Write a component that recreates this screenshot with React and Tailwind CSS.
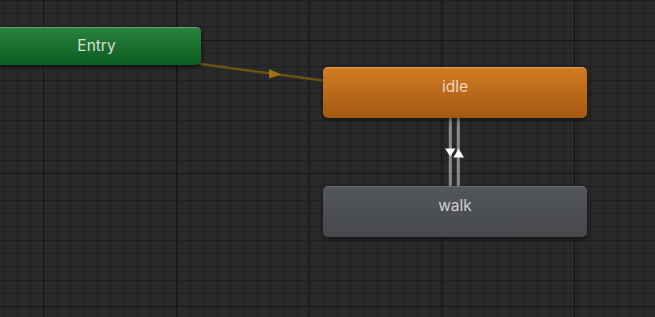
import React from "react";

const W = 655;
const H = 317;
const STEP = 40 / 3;

function Grid() {
  const minorX = [];
  const minorY = [];
  for (let k = 0; 3.33 + STEP * k < W; k++) minorX.push(Math.round(3.33 + STEP * k));
  for (let k = 0; STEP * k - 0.33 < H; k++) minorY.push(Math.round(STEP * k - 0.33));
  const majorX = [43, 176, 308, 441, 574];
  const majorY = [40, 173, 306];
  return (
    <svg className="absolute inset-0" width={W} height={H}>
      {minorX.map((x) => (
        <line key={"x" + x} x1={x + 0.5} y1="0" x2={x + 0.5} y2={H} stroke="#202020" strokeWidth="1" />
      ))}
      {minorY.map((y) => (
        <line key={"y" + y} x1="0" y1={y + 0.5} x2={W} y2={y + 0.5} stroke="#202020" strokeWidth="1" />
      ))}
      {majorX.map((x) => (
        <line key={"mx" + x} x1={x + 0.5} y1="0" x2={x + 0.5} y2={H} stroke="#161616" strokeWidth="1" />
      ))}
      {majorY.map((y) => (
        <line key={"my" + y} x1="0" y1={y + 0.5} x2={W} y2={y + 0.5} stroke="#161616" strokeWidth="1" />
      ))}
    </svg>
  );
}

function Transitions() {
  return (
    <svg className="absolute inset-0" width={W} height={H}>
      {/* entry -> idle */}
      <line x1="200" y1="64" x2="323" y2="80.5" stroke="#6a5116" strokeWidth="2.5" />
      <polygon points="269,69 281,74.5 269,78.5" fill="#9c7414" />
      {/* idle <-> walk */}
      <line x1="450.3" y1="118" x2="450.3" y2="187" stroke="#8c8c8c" strokeWidth="3" />
      <line x1="458.3" y1="118" x2="458.3" y2="187" stroke="#8c8c8c" strokeWidth="3" />
      <polygon points="445,148.5 455.5,148.5 450.3,156.5" fill="#ffffff" />
      <polygon points="453.5,157.5 464,157.5 458.5,148.5" fill="#ffffff" />
    </svg>
  );
}

export default function App() {
  return (
    <div
      className="relative w-[655px] h-[317px] overflow-hidden bg-[#292929]"
      style={{ fontFamily: "Inter, 'Noto Sans', sans-serif" }}
    >
      <Grid />
      <Transitions />

      <div className="absolute left-[-8px] top-[27px] w-[209px] h-[38px] rounded-[5px] border-t border-[#64a571] bg-gradient-to-b from-[#2a823f] to-[#0b5c20] shadow-[0_2px_5px_rgba(0,0,0,0.55)] text-center pt-[9px] text-[15.5px] leading-[18px] text-[#d4dfd6]">
        Entry
      </div>

      <div className="absolute left-[323px] top-[67px] w-[264px] h-[51px] rounded-[5px] border-t border-[#e3a063] bg-gradient-to-b from-[#d27b23] to-[#a35911] shadow-[0_2px_5px_rgba(0,0,0,0.55)] text-center pt-[10px] text-[15.5px] leading-[18px] text-[#ecd6c0]">
        idle
      </div>

      <div className="absolute left-[323px] top-[186px] w-[264px] h-[51px] rounded-[5px] border-t border-[#66696e] bg-gradient-to-b from-[#53565b] to-[#46484c] shadow-[0_2px_5px_rgba(0,0,0,0.55)] text-center pt-[10px] text-[15.5px] leading-[18px] text-[#cfcfcf]">
        walk
      </div>
    </div>
  );
}
